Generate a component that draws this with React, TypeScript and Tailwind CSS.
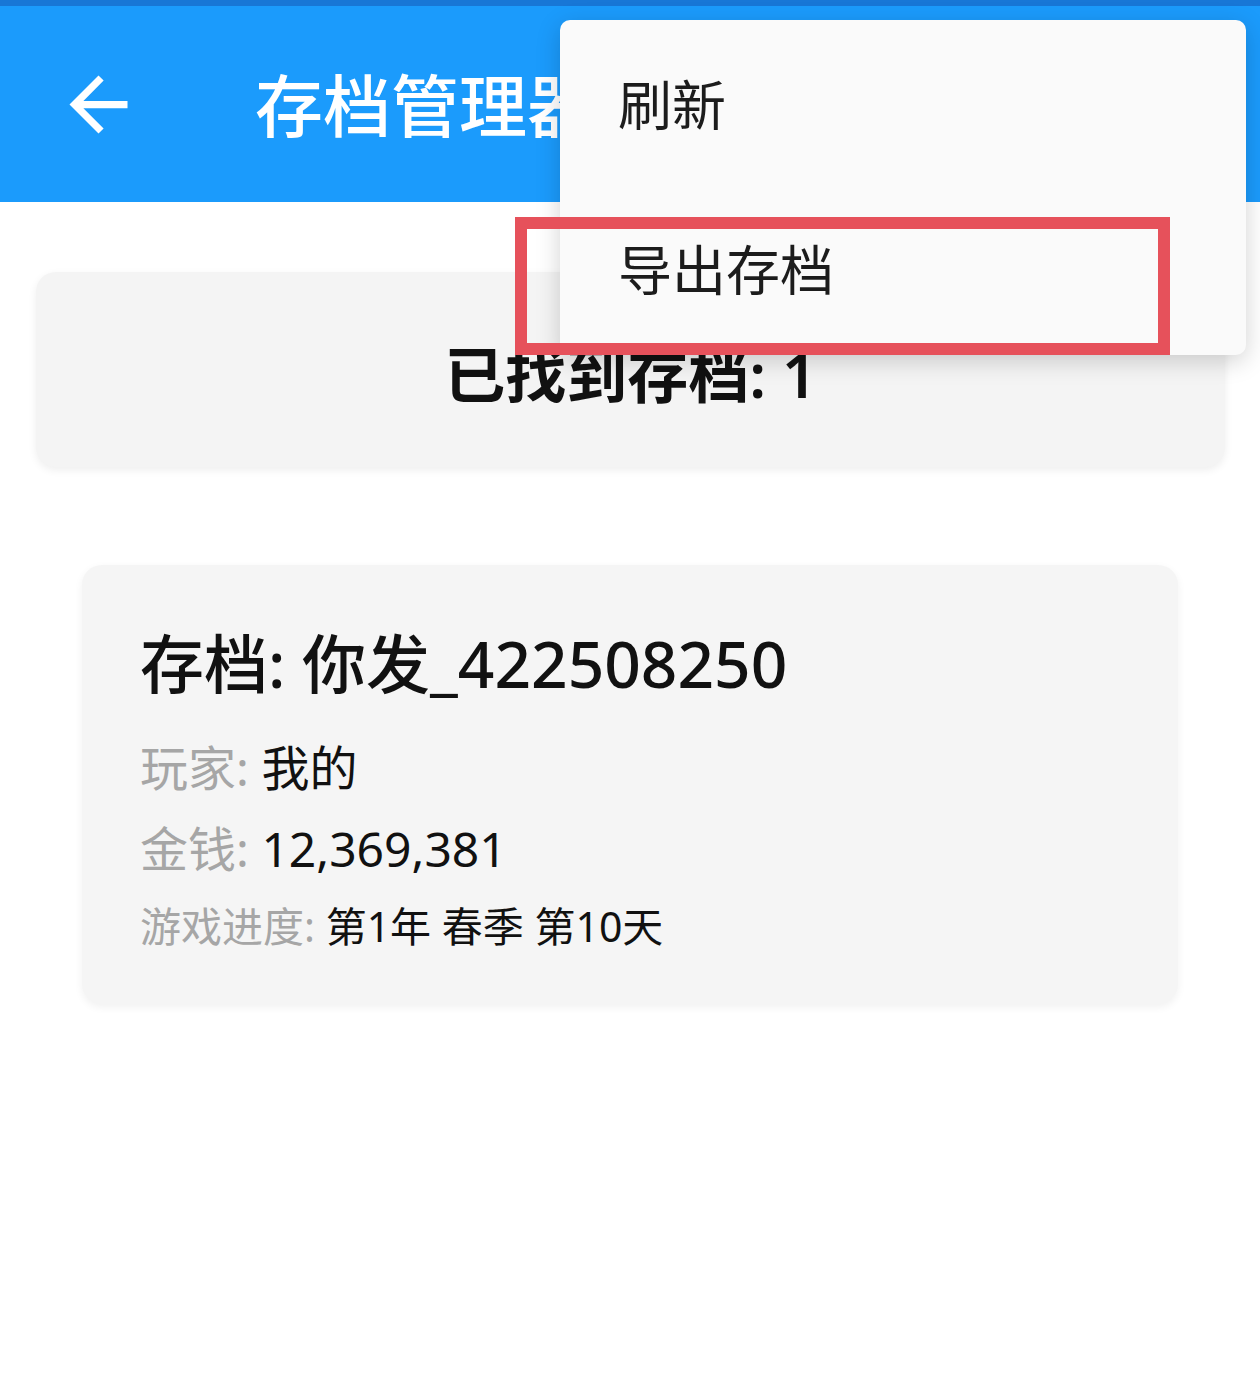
const font = { fontFamily: '"Noto Sans", "Noto Sans CJK SC", sans-serif' };

const BackArrow = () => (
  <svg width="87" height="87" viewBox="0 0 24 24" fill="white">
    <path d="M20 11H7.83l5.59-5.59L12 4l-8 8 8 8 1.41-1.41L7.83 13H20v-2z" />
  </svg>
);

const InfoRow = ({ label, value, size }: { label: string; value: string; size: string }) => (
  <div className={`${size} whitespace-nowrap`}>
    <span className="text-[#a6a6a6]">{label}: </span>
    <span className="text-[#111]">{value}</span>
  </div>
);

export default function App() {
  return (
    <div className="relative w-[1260px] h-[1388px] bg-white overflow-hidden" style={font}>
      {/* app bar */}
      <div className="h-[6px] bg-[#1877d6]" />
      <div className="h-[196px] bg-[#1b9bfc] flex items-center">
        <div className="ml-[55px] flex items-center">
          <BackArrow />
        </div>
        <div className="ml-[113px] mt-[4px] text-[68px] leading-none font-medium text-white whitespace-nowrap">存档管理器</div>
      </div>

      {/* summary card */}
      <div className="mt-[70px] ml-[36px] mr-[35px] h-[195px] rounded-[20px] bg-[#f4f4f4] shadow-[0_3px_8px_rgba(0,0,0,0.07)] flex items-center justify-center">
        <div className="text-[61px] leading-none font-semibold text-[#111] whitespace-nowrap mt-[10px]">已找到存档: 1</div>
      </div>

      {/* save card */}
      <div className="mt-[98px] mx-[82px] h-[439px] rounded-[20px] bg-[#f5f5f5] shadow-[0_3px_8px_rgba(0,0,0,0.06)] pl-[58px] pt-[63px] flex flex-col">
        <div className="text-[64px] leading-[72px] font-medium text-[#111] whitespace-nowrap">存档: 你发_422508250</div>
        <div className="mt-[40px] leading-[56px]">
          <InfoRow label="玩家" value="我的" size="text-[48px]" />
        </div>
        <div className="mt-[25px] leading-[56px]">
          <InfoRow label="金钱" value="12,369,381" size="text-[48px]" />
        </div>
        <div className="mt-[24px] leading-[50px]">
          <InfoRow label="游戏进度" value="第1年 春季 第10天" size="text-[41px]" />
        </div>
      </div>

      {/* overflow menu */}
      <div className="absolute left-[560px] top-[20px] w-[686px] h-[335px] bg-[#fafafa] rounded-[10px] shadow-[0_6px_24px_rgba(0,0,0,0.18)] flex flex-col pl-[58px]">
        <div className="h-[170px] flex items-center text-[54px] leading-none text-[#1c1c1c]">刷新</div>
        <div className="flex-1 flex items-center text-[54px] leading-none text-[#1c1c1c] -mt-[6px]">导出存档</div>
      </div>

      {/* highlight box */}
      <div className="absolute left-[515px] top-[217px] w-[655px] h-[138px] border-[12px] border-[#e6515b]" />
    </div>
  );
}
